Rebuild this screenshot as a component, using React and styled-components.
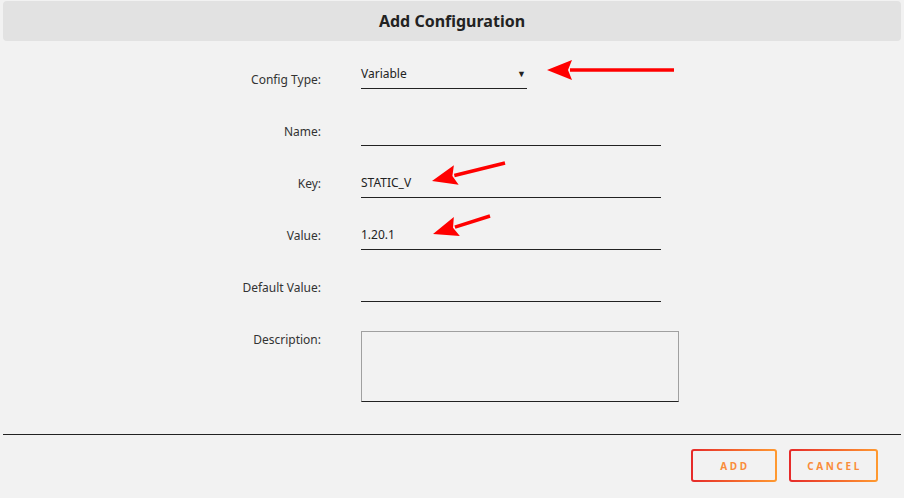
import React from "react";
import styled, { createGlobalStyle } from "styled-components";

const GlobalStyle = createGlobalStyle`
  html, body {
    margin: 0;
    background: #f2f2f2;
    font-family: "Noto Sans", "Open Sans", sans-serif;
    color: #222;
  }
`;

const Page = styled.div`
  position: relative;
  width: 904px;
  height: 498px;
  padding: 1px 3px 0;
  box-sizing: border-box;
`;

const Header = styled.header`
  height: 40px;
  background: #e2e2e2;
  border-radius: 4px;
  display: flex;
  align-items: center;
  justify-content: center;
  h1 {
    margin: 0;
    font-size: 16px;
    font-weight: 700;
    color: #222;
  }
`;

const Form = styled.form`
  display: grid;
  grid-template-columns: 318px 1fr;
  column-gap: 40px;
  row-gap: 22px;
  padding-top: 18px;
  align-items: end;
`;

const Label = styled.label`
  font-size: 12px;
  text-align: right;
  color: #333;
  line-height: 28px;
  align-self: ${(p) => (p.top ? "start" : "end")};
  padding-bottom: ${(p) => (p.top ? "0" : "0")};
  margin-top: ${(p) => (p.top ? "2px" : "0")};
`;

const Field = styled.div`
  width: ${(p) => p.width || 300}px;
  height: 30px;
  box-sizing: border-box;
  border-bottom: 1px solid #222;
  display: flex;
  align-items: center;
  justify-content: space-between;
  font-size: 12px;
  color: #222;
  margin-bottom: ${(p) => p.mb || 0}px;
`;

const Caret = styled.span`
  font-size: 9px;
  margin-right: 1px;
`;

const TextArea = styled.div`
  width: 318px;
  height: 71px;
  margin-top: 7px;
  box-sizing: border-box;
  border: 1px solid #a0a0a0;
  border-bottom-color: #222;
`;

const Divider = styled.hr`
  margin: 32px 0 0;
  border: none;
  border-top: 1px solid #222;
`;

const Actions = styled.div`
  display: flex;
  justify-content: flex-end;
  gap: 12px;
  padding: 14px 23px 0 0;
`;

const Button = styled.button`
  width: ${(p) => p.width}px;
  height: 33px;
  border: 2px solid transparent;
  border-radius: 3px;
  background: linear-gradient(#f2f2f2, #f2f2f2) padding-box,
    linear-gradient(to right, #e62a2a, #ff9a30) border-box;
  color: #f98c3a;
  font-family: "Noto Sans", sans-serif;
  font-size: 10px;
  font-weight: 700;
  letter-spacing: 2.6px;
  padding: 0 0 0 2px;
  cursor: pointer;
`;

const Arrows = styled.svg`
  position: absolute;
  left: 0;
  top: 0;
  pointer-events: none;
`;

function Arrow({ x1, y1, x2, y2 }) {
  const dx = x2 - x1;
  const dy = y2 - y1;
  const len = Math.hypot(dx, dy);
  const ux = dx / len;
  const uy = dy / len;
  const hl = 25;
  const hw = 10;
  const bx = x2 - ux * hl;
  const by = y2 - uy * hl;
  const px = -uy;
  const py = ux;
  return (
    <g fill="#ff0000" stroke="#ff0000">
      <line x1={x1} y1={y1} x2={bx + ux * 2} y2={by + uy * 2} strokeWidth="3.5" />
      <polygon
        stroke="none"
        points={`${x2},${y2} ${bx + px * hw},${by + py * hw} ${bx + ux * 4},${by + uy * 4} ${bx - px * hw},${by - py * hw}`}
      />
    </g>
  );
}

export default function App() {
  return (
    <Page>
      <GlobalStyle />
      <Header>
        <h1>Add Configuration</h1>
      </Header>
      <Form>
        <Label>Config Type:</Label>
        <Field width={166} mb={5}>
          <span>Variable</span>
          <Caret>▼</Caret>
        </Field>
        <Label>Name:</Label>
        <Field />
        <Label>Key:</Label>
        <Field>STATIC_V</Field>
        <Label>Value:</Label>
        <Field>1.20.1</Field>
        <Label>Default Value:</Label>
        <Field />
        <Label top>Description:</Label>
        <TextArea />
      </Form>
      <Divider />
      <Actions>
        <Button type="button" width={86}>ADD</Button>
        <Button type="button" width={89}>CANCEL</Button>
      </Actions>
      <Arrows width="904" height="498">
        <Arrow x1={674} y1={70} x2={547} y2={70} />
        <Arrow x1={505} y1={163} x2={432} y2={181} />
        <Arrow x1={490} y1={216} x2={433} y2={234} />
      </Arrows>
    </Page>
  );
}
